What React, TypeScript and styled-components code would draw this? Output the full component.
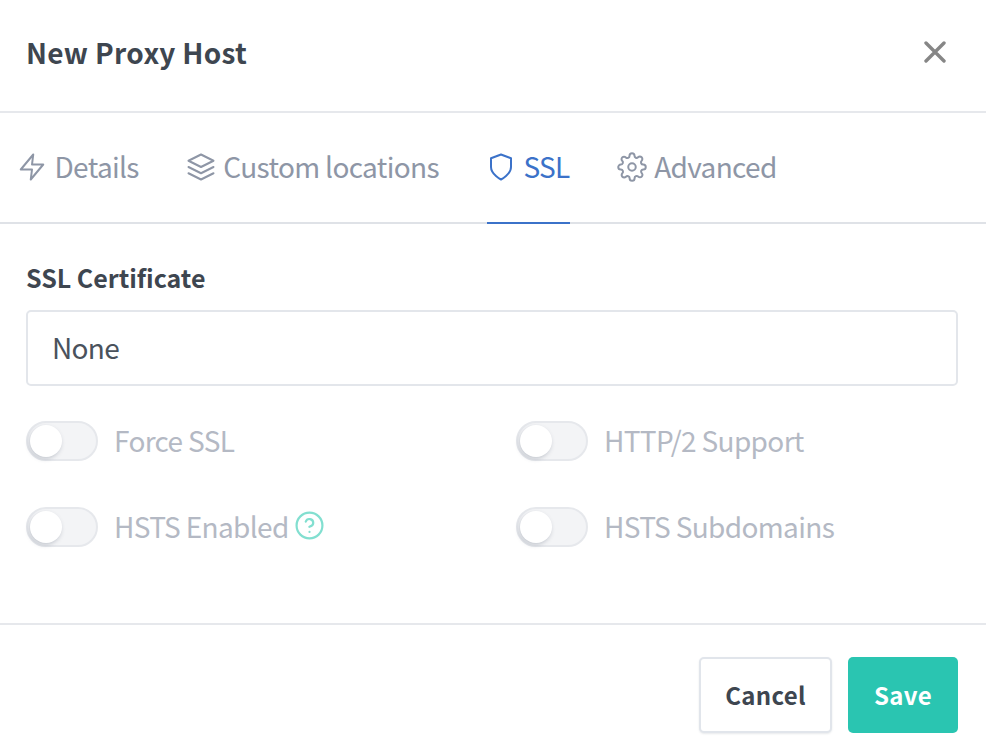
import * as React from "react";
import styled, { createGlobalStyle } from "styled-components";
import { FiZap, FiLayers, FiShield, FiSettings, FiHelpCircle } from "react-icons/fi";

const GlobalStyle = createGlobalStyle`
  html, body {
    margin: 0;
    background: #fff;
  }
  body {
    font-family: "Noto Sans CJK SC", "Noto Sans", sans-serif;
    color: #3e4650;
  }
  * {
    box-sizing: border-box;
  }
`;

const Modal = styled.div`
  width: 986px;
  height: 756px;
  display: flex;
  flex-direction: column;
  background: #fff;
`;

const Header = styled.div`
  height: 113px;
  padding: 0 40px 0 26px;
  display: flex;
  align-items: center;
  justify-content: space-between;
  border-bottom: 2px solid #e6e8ec;
`;

const Title = styled.div`
  font-size: 28px;
  line-height: 34px;
  font-weight: 700;
  letter-spacing: 0.35px;
  color: #3e4650;
  margin-top: -7px;
`;

const CloseButton = styled.button`
  width: 22px;
  height: 22px;
  margin-top: -7px;
  padding: 0;
  border: 0;
  background: none;
  color: #868686;
  display: flex;
`;

const Tabs = styled.div`
  height: 111px;
  padding-left: 18px;
  display: flex;
  gap: 48px;
  border-bottom: 2px solid #dfe2e7;
`;

const Tab = styled.div<{ $active?: boolean }>`
  height: 111px;
  padding-bottom: 4px;
  display: flex;
  align-items: center;
  gap: 7.5px;
  font-size: 28px;
  line-height: 36px;
  letter-spacing: -0.65px;
  color: ${(p) => (p.$active ? "#3b72c9" : "#8e96a6")};
  border-bottom: 2px solid ${(p) => (p.$active ? "#3b72c9" : "transparent")};

  svg {
    width: 30px;
    height: 30px;
    margin-left: -1px;
    margin-top: 3px;
    stroke-width: 1.6;
    flex-shrink: 0;
  }
`;

const Body = styled.div`
  flex: 1;
  padding: 38px 28px 0 26px;
  border-bottom: 2px solid #e6e8ec;
`;

const Label = styled.div`
  font-size: 25px;
  line-height: 30px;
  font-weight: 700;
  color: #3e4650;
  margin-bottom: 18px;
`;

const Select = styled.div`
  height: 76px;
  padding: 0 24px 2px 24px;
  display: flex;
  align-items: center;
  font-size: 28px;
  letter-spacing: -0.7px;
  color: #4a525c;
  border: 2px solid #e3e6eb;
  border-radius: 5px;
`;

const Switches = styled.div`
  margin-top: 35px;
  display: grid;
  grid-template-columns: 490px 1fr;
  grid-auto-rows: 40px;
  row-gap: 46px;
`;

const SwitchRow = styled.div`
  display: flex;
  align-items: center;
  gap: 16px;
`;

const Track = styled.div`
  position: relative;
  width: 72px;
  height: 40px;
  border-radius: 20px;
  background: #f3f4f6;
  border: 2px solid #e6e8ec;
`;

const Knob = styled.div`
  position: absolute;
  left: 2px;
  top: 2px;
  width: 32px;
  height: 32px;
  border-radius: 50%;
  background: #fff;
  box-shadow: -1px 2px 4px rgba(80, 90, 110, 0.28);
`;

const SwitchLabel = styled.span`
  font-size: 28px;
  line-height: 36px;
  letter-spacing: -0.65px;
  color: #b4b9c4;
  padding-bottom: 2px;
  display: flex;
  align-items: center;
  gap: 6px;

  svg {
    width: 31px;
    height: 31px;
    margin-left: -1px;
    margin-top: -2px;
    color: #82dfd0;
    stroke-width: 1.7;
  }
`;

const Footer = styled.div`
  height: 131px;
  padding: 0 28px 23px 0;
  display: flex;
  align-items: flex-end;
  justify-content: flex-end;
  gap: 16px;
`;

const Button = styled.button<{ $primary?: boolean }>`
  height: 76px;
  width: ${(p) => (p.$primary ? "110px" : "133px")};
  padding: 0 0 2px;
  font-family: inherit;
  font-size: 24px;
  font-weight: 700;
  letter-spacing: 0.3px;
  border-radius: 5px;
  color: ${(p) => (p.$primary ? "#fff" : "#3e4650")};
  background: ${(p) => (p.$primary ? "#2ac5b1" : "#fff")};
  border: ${(p) => (p.$primary ? "0" : "2px solid #e1e5eb")};
  box-shadow: ${(p) => (p.$primary ? "none" : "0 1px 2px rgba(60, 70, 90, 0.12)")};
`;

const switches = [
  { label: "Force SSL" },
  { label: "HTTP/2 Support" },
  { label: "HSTS Enabled", help: true },
  { label: "HSTS Subdomains" },
];

export default function App() {
  return (
    <Modal>
      <GlobalStyle />
      <Header>
        <Title>New Proxy Host</Title>
        <CloseButton>
          <svg width="22" height="22" viewBox="0 0 22 22" fill="none" stroke="currentColor" strokeWidth="3.4" strokeLinecap="round">
            <path d="M2 2l18 18M20 2L2 20" />
          </svg>
        </CloseButton>
      </Header>
      <Tabs>
        <Tab><FiZap />Details</Tab>
        <Tab><FiLayers />Custom locations</Tab>
        <Tab $active><FiShield />SSL</Tab>
        <Tab><FiSettings />Advanced</Tab>
      </Tabs>
      <Body>
        <Label>SSL Certificate</Label>
        <Select>None</Select>
        <Switches>
          {switches.map((s) => (
            <SwitchRow key={s.label}>
              <Track><Knob /></Track>
              <SwitchLabel>
                {s.label}
                {s.help && <FiHelpCircle />}
              </SwitchLabel>
            </SwitchRow>
          ))}
        </Switches>
      </Body>
      <Footer>
        <Button>Cancel</Button>
        <Button $primary>Save</Button>
      </Footer>
    </Modal>
  );
}
